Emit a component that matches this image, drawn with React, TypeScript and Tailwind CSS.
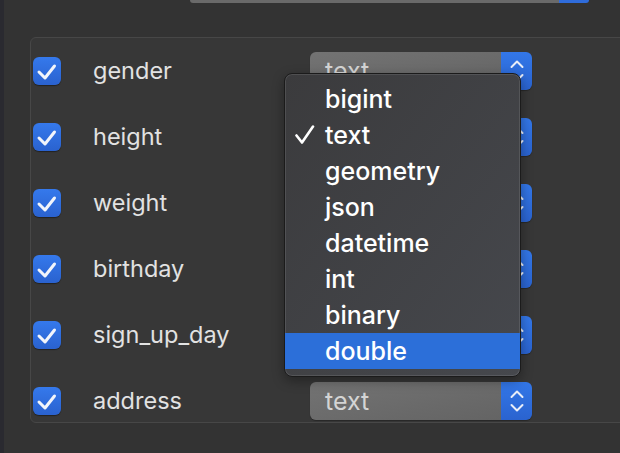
import React from "react";

const rows = ["gender", "height", "weight", "birthday", "sign_up_day", "address"];
const options = ["bigint", "text", "geometry", "json", "datetime", "int", "binary", "double"];

function Check() {
  return (
    <div className="w-[28px] h-[28px] rounded-[6px] bg-gradient-to-b from-[#3579ec] to-[#2a62cf] flex items-center justify-center shadow-[0_1px_1px_rgba(0,0,0,0.4)]">
      <svg width="28" height="28" viewBox="0 0 28 28">
        <path d="M6 15 L12 21 L21.5 9" fill="none" stroke="#f2f5fb" strokeWidth="3" strokeLinecap="round" strokeLinejoin="round" />
      </svg>
    </div>
  );
}

function Select() {
  return (
    <div className="flex w-[222px] h-[38px] rounded-[6px] overflow-hidden shadow-[0_1px_1px_rgba(0,0,0,0.3)]">
      <div className="flex-1 bg-gradient-to-br from-[#737373] to-[#646464] flex items-center pl-[15px] text-[25px] text-[#d4d4d4] leading-none">
        text
      </div>
      <div className="w-[31px] bg-gradient-to-b from-[#3377e8] to-[#2a63cf] flex items-center justify-center">
        <svg width="16" height="26" viewBox="0 0 16 26">
          <path d="M2.5 9 L8 3.5 L13.5 9" fill="none" stroke="#e9eef8" strokeWidth="2" strokeLinecap="round" strokeLinejoin="round" />
          <path d="M2.5 17 L8 22.5 L13.5 17" fill="none" stroke="#e9eef8" strokeWidth="2" strokeLinecap="round" strokeLinejoin="round" />
        </svg>
      </div>
    </div>
  );
}

export default function App() {
  return (
    <div className="relative w-[620px] h-[453px] overflow-hidden bg-[#333333] font-['Inter',sans-serif]">
      <div className="absolute left-0 top-0 w-[4px] h-full bg-[#2a2a30]" />
      <div className="ml-[190px] w-[399px] h-[3px] flex rounded-b-[3px] overflow-hidden">
        <div className="flex-1 bg-[#6a6a6a]" />
        <div className="w-[30px] bg-[#2f6cdb]" />
      </div>
      <div className="mt-[34px] ml-[30px] w-[620px] h-[386px] border border-[#474747] rounded-[6px] bg-[#373737] pt-[14px] pl-[2px] flex flex-col gap-[28px]">
        {rows.map((r) => (
          <div key={r} className="flex items-center h-[38px]">
            <Check />
            <div className="ml-[32px] w-[217px] text-[23.5px] text-[#e2e2e2] leading-none">{r}</div>
            <Select />
          </div>
        ))}
      </div>
      <div className="absolute left-[284px] top-[73px] w-[237px] h-[304px] rounded-[8px] border border-[#1b1b1b] bg-gradient-to-br from-[#3b3b3d] to-[#46484d] shadow-[inset_0_0_0_1px_rgba(255,255,255,0.1),0_4px_12px_rgba(0,0,0,0.35)] py-[7px]">
        {options.map((o) => (
          <div
            key={o}
            className={
              o === "double"
                ? "relative h-[36px] flex items-center pl-[40px] text-[25px] font-medium text-white leading-none bg-[#2c6fd9]"
                : "relative h-[36px] flex items-center pl-[40px] text-[25px] font-medium text-white leading-none"
            }
          >
            {o === "text" && (
              <svg className="absolute left-[10px] top-[8px]" width="20" height="20" viewBox="0 0 20 20">
                <path d="M1.5 10.5 L7 17.5 L18 1.5" fill="none" stroke="#ffffff" strokeWidth="2.6" strokeLinecap="round" strokeLinejoin="round" />
              </svg>
            )}
            {o}
          </div>
        ))}
      </div>
    </div>
  );
}
